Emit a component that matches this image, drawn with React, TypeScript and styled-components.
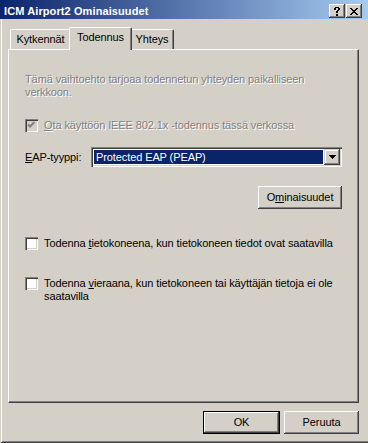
import styled, { createGlobalStyle } from 'styled-components'

const GlobalStyle = createGlobalStyle`
  html, body {
    margin: 0;
    padding: 0;
    background: #d4d0c8;
  }
  body {
    font-family: "Liberation Sans", Arial, sans-serif;
    font-size: 11px;
    letter-spacing: -0.1px;
  }
`

const Window = styled.div`
  width: 368px;
  height: 443px;
  box-sizing: border-box;
  background: #d4d0c8;
  display: flex;
  flex-direction: column;
  box-shadow: inset 1px 0 #d4d0c8, inset 0 -1px #404040, inset 2px 0 #fff,
    inset 0 -2px #808080;
`

const TitleBar = styled.div`
  height: 19px;
  flex: none;
  box-sizing: border-box;
  display: flex;
  align-items: flex-start;
  padding: 5px 6px 0 4px;
  background: linear-gradient(to right, #0a246a, #a6caf0);
`

const Title = styled.span`
  color: #fff;
  font-weight: bold;
  font-size: 11px;
  line-height: 13px;
  letter-spacing: 0.1px;
  white-space: nowrap;
`

const Controls = styled.div`
  margin-left: auto;
  margin-top: -1px;
  display: flex;
  gap: 1px;
`

const CaptionButton = styled.div`
  width: 16px;
  height: 14px;
  box-sizing: border-box;
  background: #d4d0c8;
  box-shadow: inset -1px -1px #404040, inset 1px 1px #fff, inset -2px -2px #808080;
  display: flex;
  align-items: center;
  justify-content: center;
  svg {
    display: block;
  }
`

const TabStrip = styled.div`
  display: flex;
  align-items: flex-end;
  height: 22px;
  margin: 8px 0 0 8px;
  padding-left: 2px;
`

const Tab = styled.div<{ $active?: boolean; $w: number }>`
  position: ${(p) => (p.$active ? 'relative' : 'static')};
  z-index: ${(p) => (p.$active ? 1 : 0)};
  width: ${(p) => p.$w + (p.$active ? 4 : 0)}px;
  height: ${(p) => (p.$active ? 23 : 20)}px;
  margin: 0 ${(p) => (p.$active ? -2 : 0)}px ${(p) => (p.$active ? -1 : 0)}px;
  box-sizing: border-box;
  background: #d4d0c8;
  border-top: 1px solid #fff;
  border-left: 1px solid #fff;
  border-right: 1px solid #404040;
  border-radius: 2px 2px 0 0;
  box-shadow: inset -1px 0 #808080;
  display: flex;
  align-items: center;
  justify-content: center;
  padding-bottom: ${(p) => (p.$active ? 3 : 0)}px;
  line-height: 13px;
  color: #000;
`

const Pane = styled.div`
  margin-left: 8px;
  width: 351px;
  height: 354px;
  flex: none;
  box-sizing: border-box;
  border-top: 1px solid #fff;
  border-left: 1px solid #fff;
  border-right: 1px solid #404040;
  border-bottom: 1px solid #404040;
  box-shadow: inset -1px -1px #808080;
  padding: 23px 16px 0;
  display: flex;
  flex-direction: column;
`

const Description = styled.p`
  margin: 0;
  line-height: 13px;
  color: #808080;
  text-shadow: 1px 1px #fff;
`

const CheckRow = styled.label<{ $gap: number; $disabled?: boolean }>`
  margin-top: ${(p) => p.$gap}px;
  display: flex;
  align-items: flex-start;
  gap: 6px;
  line-height: 13px;
  color: ${(p) => (p.$disabled ? '#808080' : '#000')};
  text-shadow: ${(p) => (p.$disabled ? '1px 1px #fff' : 'none')};
`

const CheckBox = styled.span<{ $disabled?: boolean }>`
  width: 13px;
  height: 13px;
  flex: none;
  box-sizing: border-box;
  background: ${(p) => (p.$disabled ? '#d4d0c8' : '#fff')};
  box-shadow: inset 1px 1px #808080, inset 2px 2px #404040, inset -1px -1px #fff,
    inset -2px -2px #d4d0c8;
  svg {
    display: block;
  }
`

const Mnemonic = styled.span`
  text-decoration: underline;
  text-underline-offset: 1px;
`

const FieldRow = styled.div`
  margin-top: 15px;
  display: flex;
  align-items: center;
`

const FieldLabel = styled.span`
  width: 66px;
  flex: none;
  line-height: 13px;
`

const Select = styled.div`
  width: 251px;
  height: 20px;
  box-sizing: border-box;
  padding: 2px;
  background: #fff;
  box-shadow: inset 1px 1px #808080, inset 2px 2px #404040, inset -1px -1px #fff,
    inset -2px -2px #d4d0c8;
  display: flex;
`

const SelectValue = styled.div`
  flex: 1;
  margin: 1px;
  padding-left: 2px;
  background: #0a246a;
  color: #fff;
  line-height: 14px;
  white-space: nowrap;
`

const ArrowButton = styled.div`
  width: 16px;
  height: 16px;
  flex: none;
  box-sizing: border-box;
  background: #d4d0c8;
  box-shadow: inset -1px -1px #404040, inset 1px 1px #d4d0c8, inset -2px -2px #808080,
    inset 2px 2px #fff;
  display: flex;
  align-items: center;
  justify-content: center;
  svg {
    display: block;
  }
`

const RightRow = styled.div<{ $gap: number }>`
  margin-top: ${(p) => p.$gap}px;
  display: flex;
  justify-content: flex-end;
`

const Button = styled.button<{ $w: number; $default?: boolean }>`
  width: ${(p) => p.$w}px;
  height: 23px;
  box-sizing: border-box;
  padding: 0;
  margin: 0;
  font-family: inherit;
  font-size: 11px;
  letter-spacing: inherit;
  color: #000;
  background: #d4d0c8;
  border: ${(p) => (p.$default ? '1px solid #000' : 'none')};
  box-shadow: inset -1px -1px #404040, inset 1px 1px #fff, inset -2px -2px #808080;
  line-height: 13px;
`

const Footer = styled.div`
  display: flex;
  justify-content: flex-end;
  gap: 4px;
  padding: 8px 9px 0 0;
`

const Check = ({ color }: { color: string }) => (
  <svg width="13" height="13" viewBox="0 0 13 13">
    <path d="M3 5.5 L5 7.5 L9.5 3" fill="none" stroke={color} strokeWidth="2" />
  </svg>
)

export default function App() {
  return (
    <>
      <GlobalStyle />
      <Window>
        <TitleBar>
          <Title>ICM Airport2 Ominaisuudet</Title>
          <Controls>
            <CaptionButton>
              <svg width="6" height="9" viewBox="0 0 6 9" shapeRendering="crispEdges">
                <path
                  d="M1 0h4v1H1zM0 1h2v2H0zM4 1h2v2H4zM3 3h2v1H3zM2 4h2v2H2zM2 7h2v2H2z"
                  fill="#000"
                />
              </svg>
            </CaptionButton>
            <CaptionButton>
              <svg width="8" height="7" viewBox="0 0 8 7" shapeRendering="crispEdges">
                <path
                  d="M0 0h2v1H0zM6 0h2v1H6zM1 1h2v1H1zM5 1h2v1H5zM2 2h4v1H2zM3 3h2v1H3zM2 4h4v1H2zM1 5h2v1H1zM5 5h2v1H5zM0 6h2v1H0zM6 6h2v1H6z"
                  fill="#000"
                />
              </svg>
            </CaptionButton>
          </Controls>
        </TitleBar>

        <TabStrip>
          <Tab $w={61}>Kytkennät</Tab>
          <Tab $w={59} $active>
            Todennus
          </Tab>
          <Tab $w={44}>Yhteys</Tab>
        </TabStrip>

        <Pane>
          <Description>
            Tämä vaihtoehto tarjoaa todennetun yhteyden paikalliseen
            <br />
            verkkoon.
          </Description>

          <CheckRow $gap={20} $disabled>
            <CheckBox $disabled>
              <Check color="#808080" />
            </CheckBox>
            <span>
              <Mnemonic>O</Mnemonic>ta käyttöön IEEE 802.1x -todennus tässä verkossa
            </span>
          </CheckRow>

          <FieldRow>
            <FieldLabel>
              <Mnemonic>E</Mnemonic>AP-tyyppi:
            </FieldLabel>
            <Select>
              <SelectValue>Protected EAP (PEAP)</SelectValue>
              <ArrowButton>
                <svg width="7" height="4" viewBox="0 0 7 4" shapeRendering="crispEdges">
                  <path d="M0 0h7v1H0zM1 1h5v1H1zM2 2h3v1H2zM3 3h1v1H3z" fill="#000" />
                </svg>
              </ArrowButton>
            </Select>
          </FieldRow>

          <RightRow $gap={19}>
            <Button $w={84}>
              O<Mnemonic>m</Mnemonic>inaisuudet
            </Button>
          </RightRow>

          <CheckRow $gap={28}>
            <CheckBox />
            <span>
              Todenna <Mnemonic>t</Mnemonic>ietokoneena, kun tietokoneen tiedot ovat saatavilla
            </span>
          </CheckRow>

          <CheckRow $gap={27}>
            <CheckBox />
            <span>
              Todenna <Mnemonic>v</Mnemonic>ieraana, kun tietokoneen tai käyttäjän tietoja ei ole
              <br />
              saatavilla
            </span>
          </CheckRow>
        </Pane>

        <Footer>
          <Button $w={77} $default>
            OK
          </Button>
          <Button $w={75}>Peruuta</Button>
        </Footer>
      </Window>
    </>
  )
}
